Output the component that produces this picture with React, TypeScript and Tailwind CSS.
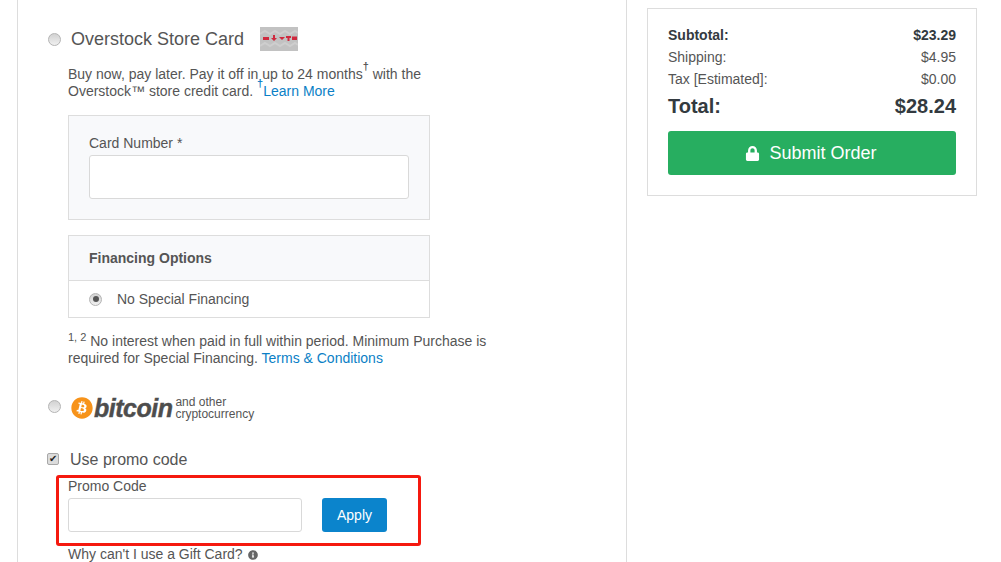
import { FaBitcoin, FaInfoCircle, FaLock } from 'react-icons/fa';

function Radio({ checked = false }: { checked?: boolean }) {
  return (
    <span className="flex h-[13px] w-[13px] shrink-0 items-center justify-center rounded-full border border-[#b4b4b4] bg-gradient-to-b from-[#d2d2d2] to-[#f0f0f0]">
      {checked && <span className="h-[6px] w-[6px] rounded-full bg-[#555555]" />}
    </span>
  );
}

function CardThumb() {
  return (
    <svg className="ml-[16px] shrink-0" width="38" height="24" viewBox="0 0 38 24">
      <rect width="38" height="24" fill="#c2c2c2" />
      <path d="M0 7l5-3 5 3 5-3 5 3 5-3 5 3 5-3 3 2M0 19l5-3 5 3 5-3 5 3 5-3 5 3 5-3 3 2" fill="none" stroke="#cecece" strokeWidth="2" />
      <path d="M3 10h6v3H3zM13 8h2v3h2l-3 3-3-3h2zM19 10h6l-3 3zM26 9h5v2h-1.500v3h-2v-3H26zM32 9.500h5v3.500h-5z" fill="#cf2a3f" />
    </svg>
  );
}

function SummaryRow({ label, value, bold = false }: { label: string; value: string; bold?: boolean }) {
  return (
    <div className={`flex h-[22px] items-center justify-between ${bold ? 'font-bold text-[#333a40]' : ''}`}>
      <span>{label}</span>
      <span>{value}</span>
    </div>
  );
}

export default function App() {
  return (
    <div className="flex h-[562px] w-[1001px] items-start overflow-hidden bg-white pl-[17px] font-['Liberation_Sans',Arial,sans-serif] text-[14px] leading-[17px] text-[#555555]">
      {/* Payment column */}
      <div className="relative h-[562px] w-[610px] shrink-0 border-x border-[#dddddd] pl-[30px]">
        <div className="mt-[25px] flex h-[28px] items-center">
          <Radio />
          <span className="ml-[10px] text-[18px]">Overstock Store Card</span>
          <CardThumb />
        </div>

        <div className="ml-[20px] w-[362px]">
          <p className="mt-[13px]">
            Buy now, pay later. Pay it off in up to 24 months<sup className="align-[4px] text-[11px] leading-none font-bold">†</sup> with the
            Overstock™ store credit card. <span className="text-[#0b7fc6]"><sup className="align-[4px] text-[11px] leading-none font-bold">†</sup>Learn More</span>
          </p>

          <div className="mt-[15px] h-[105px] border border-[#dddddd] bg-[#f8f9fb] px-[20px] pt-[19px]">
            <div>Card Number *</div>
            <div className="mt-[3px] h-[44px] rounded-[3px] border border-[#d9d9d9] bg-white" />
          </div>

          <div className="mt-[15px] h-[83px] border border-[#dddddd]">
            <div className="flex h-[45px] items-center border-b border-[#dddddd] bg-[#f8f9fb] pl-[20px] font-bold">
              Financing Options
            </div>
            <div className="flex h-[36px] items-center pl-[20px]">
              <Radio checked />
              <span className="ml-[15px]">No Special Financing</span>
            </div>
          </div>
        </div>

        <p className="ml-[20px] mt-[15px] w-[430px]">
          <sup className="text-[11px] leading-none">1, 2</sup> No interest when paid in full within period. Minimum Purchase is
          required for Special Financing. <span className="text-[#0b7fc6]">Terms &amp; Conditions</span>
        </p>

        <div className="mt-[27px] flex h-[28px] items-center">
          <div className="mb-[3px]">
            <Radio />
          </div>
          <FaBitcoin className="ml-[10px] h-[22px] w-[22px] text-[#f7931a]" />
          <span className="ml-[1px] text-[25px] font-bold italic leading-none tracking-[-0.5px] text-[#4d4d4d] [-webkit-text-stroke:0.4px_#4d4d4d]">bitcoin</span>
          <span className="ml-[3px] text-[12px] leading-[12px]">
            and other
            <br />
            cryptocurrency
          </span>
        </div>

        <div className="mt-[27px] flex h-[20px] items-center">
          <span className="-ml-px flex h-[12px] w-[12px] items-center justify-center rounded-[2px] border border-[#a8a8a8] bg-[#dcdcdc] text-[10px] leading-none text-[#222222]">
            ✔
          </span>
          <span className="ml-[11px] text-[16px]">Use promo code</span>
        </div>

        <div className="ml-[20px] mt-[9px]">Promo Code</div>
        <div className="ml-[20px] mt-[3px] flex items-center">
          <div className="h-[34px] w-[234px] rounded-[3px] border border-[#d9d9d9] bg-white" />
          <button className="ml-[20px] h-[34px] w-[65px] rounded-[3px] bg-[#0b84cc] text-white">Apply</button>
        </div>
        <div className="ml-[20px] mt-[14px] flex items-center">
          Why can't I use a Gift Card?
          <FaInfoCircle className="ml-[5px] h-[10px] w-[10px] text-[#666666]" />
        </div>

        {/* red annotation drawn over the promo form */}
        <div className="absolute left-[38px] top-[475px] h-[71px] w-[365px] rounded-[3px] border-[3px] border-[#f5190f]" />
      </div>

      {/* Order summary */}
      <div className="ml-[20px] mt-[8px] h-[188px] w-[330px] border border-[#dddddd] px-[20px] pt-[15px]">
        <SummaryRow label="Subtotal:" value="$23.29" bold />
        <SummaryRow label="Shipping:" value="$4.95" />
        <SummaryRow label="Tax [Estimated]:" value="$0.00" />
        <div className="flex h-[32px] items-center justify-between text-[20px] font-bold text-[#333a40]">
          <span>Total:</span>
          <span>$28.24</span>
        </div>
        <button className="mt-[9px] flex h-[44px] w-full items-center justify-center rounded-[3px] bg-[#27ae60] text-[18px] text-white">
          <FaLock className="-ml-[2px] mr-[9px] h-[15px] w-[15px]" />
          Submit Order
        </button>
      </div>
    </div>
  );
}
